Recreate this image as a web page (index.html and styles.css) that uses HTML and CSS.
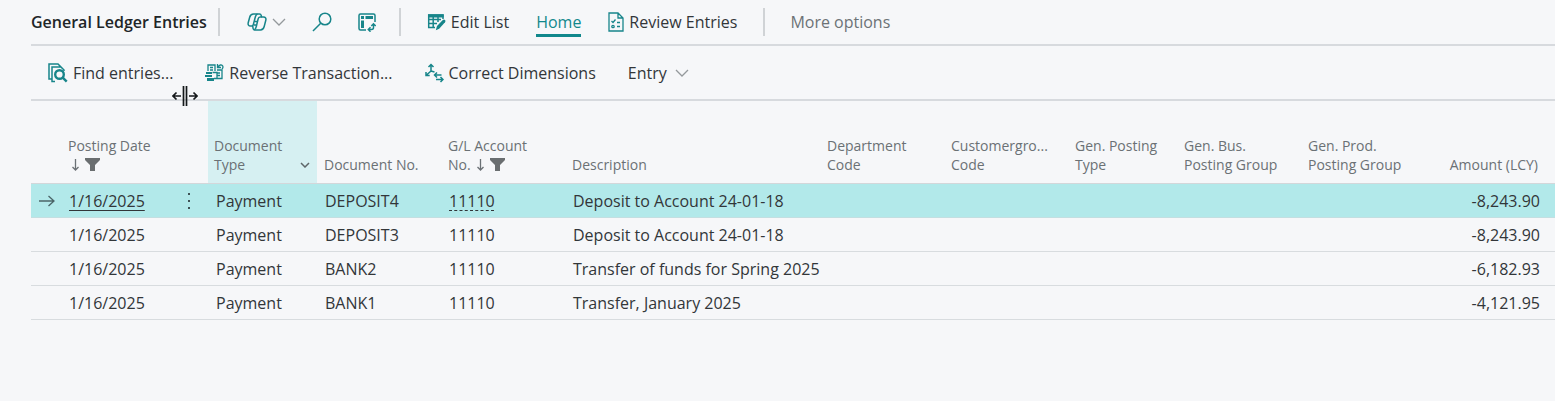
FILE: index.html
```html
<!DOCTYPE html>
<html lang="en">
<head>
  <meta charset="UTF-8">
  <meta name="viewport" content="width=device-width, initial-scale=1.0">
  <title>General Ledger Entries</title>
  <link rel="stylesheet" href="styles.css">
</head>
<body>
  <main class="page">
    <header class="topbar">
      <h1 class="title">General Ledger Entries</h1>
      <div class="tools">
        <button class="btn" aria-label="Copilot">
          <svg class="icon" width="20" height="20" viewBox="0 0 20 20">
            <path d="M6.500 2h6c1 0 1.500.6 1.700 1.400l.4 1.600h1.900c1.900 0 2.800 1.400 2.300 3.200l-1.600 6.300c-.5 1.900-1.600 3.500-3.700 3.500H7.800c-1 0-1.500-.6-1.700-1.400L5.700 14H3.500C1.600 14 .8 12.600 1.200 10.800L2.700 5.200C3.200 3.300 4.400 2 6.500 2z"/>
            <path d="M10.500 2C9 2.500 8.700 3.500 8.300 5L6.500 12c-.3 1.200-.6 2-1.500 2M14.600 5h-1.500c-1.300 0-1.700.8-2 2L9.300 14.500c-.4 1.700-.8 3-2 3.300M8 9.500h3M7 13h3"/>
          </svg>
          <svg class="chevron" width="14" height="8" viewBox="0 0 14 8"><path d="M1 1l6 6 6-6"/></svg>
        </button>
        <button class="btn" aria-label="Search">
          <svg class="icon" width="20" height="20" viewBox="0 0 20 20"><circle cx="13" cy="7" r="5.800"/><path d="M8.700 11.200L1 19"/></svg>
        </button>
        <button class="btn" aria-label="Analyze">
          <svg class="icon" width="18" height="19" viewBox="0 0 18 19">
            <path d="M8 17H2.500Q1 17 1 15.500V2.500Q1 1 2.500 1h13Q17 1 17 2.500V9M10.500 16.500h3q2 0 2-2V11M12.500 14.300l-2.200 2.200 2.200 2.200M13.300 13l2.200-2.200 2.200 2.200"/>
            <path class="fill" d="M3 3h3v3H3zM7.500 3H15v3H7.500zM3 7.500h3V15H3z"/>
          </svg>
        </button>
      </div>
      <nav class="actions">
        <button class="btn">
          <svg class="icon" width="19" height="18" viewBox="0 0 19 18">
            <path d="M8 14.500H1.700V2H16v4M2 6.500h12M2 10.500h8M6.200 3v11.500M11 3v6"/>
            <path class="fill" d="M1 1.300h15.700V4.500H1z"/>
            <path class="fill" d="M8.800 17.300l1.200-4.300 5.800-6q1.200-1 2.200 0t0 2.300l-5.800 6.500z"/>
          </svg>
          Edit List
        </button>
        <button class="btn active">Home</button>
        <button class="btn">
          <svg class="icon thin" width="16" height="20" viewBox="0 0 16 20">
            <path d="M1 1h9l5 5v13H1zM10 1v5h5M3.500 9l1.500 1.500L7.500 7.500M9 10.500h3M9 14.500h3"/><circle cx="5" cy="14.500" r="1.200"/>
          </svg>
          Review Entries
        </button>
      </nav>
      <button class="btn more">More options</button>
    </header>

    <nav class="subbar">
      <button class="btn">
        <svg class="icon" width="20" height="20" viewBox="0 0 20 20">
          <path d="M4 16H1V1h9l3 3M7 18.500H4V4h9l3 3v1"/>
          <g class="bold"><circle cx="11.500" cy="11.500" r="4.300"/><path d="M14.700 14.700l4 4"/></g>
        </svg>
        Find entries...
      </button>
      <button class="btn">
        <svg class="icon thin" width="19" height="19" viewBox="0 0 19 19">
          <path d="M3 8V2h7v6M12 7h5v8.500h-5M5 4.500h3M5 7h3M12 10h3M12 12.500h3M7.500 9.500H12v6H9"/>
          <path class="fill" d="M1 9h6v2H1zM0 12h7v2H0zM2 15h7v3H2z"/>
          <path d="M12.500 1v3.500H16M13 4q2.500-3.500 4.700-1 .8 1.500-.7 3"/>
        </svg>
        Reverse Transaction...
      </button>
      <button class="btn">
        <svg class="icon" width="19" height="20" viewBox="0 0 19 20">
          <path d="M6 8V1.500M3.500 4L6 1.500 8.500 4M6 8l-5 4.500M1 9v3.500h3.700M6 8l3.500 1M9.500 12h7M12 9.500L9.500 12l2.500 2.500M11 16.500h7M15.500 14l2.500 2.500-2.500 2.500"/>
        </svg>
        Correct Dimensions
      </button>
      <button class="btn entry">
        Entry
        <svg class="chevron" width="14" height="8" viewBox="0 0 14 8"><path d="M1 1l6 6 6-6"/></svg>
      </button>
    </nav>

    <table class="entries">
      <colgroup>
        <col class="w-mark"><col class="w-date"><col class="w-menu"><col class="w-type">
        <col class="w-code"><col class="w-code"><col class="w-desc"><col class="w-code">
        <col class="w-code"><col class="w-type"><col class="w-code"><col class="w-code"><col>
      </colgroup>
      <thead>
        <tr>
          <th></th>
          <th>Posting Date
            <span class="marks">
              <svg class="sort" width="9" height="14" viewBox="0 0 9 14"><path d="M4.500 1v11M1.500 9l3 3 3-3"/></svg>
              <svg class="filter" width="15" height="13" viewBox="0 0 15 13"><path d="M0 0h15v2L10 7v6H5V7L0 2z"/></svg>
            </span>
          </th>
          <th></th>
          <th class="picked">
            <div class="head">Document Type
              <svg class="caret" width="10" height="6" viewBox="0 0 10 6"><path d="M1 1l4 4 4-4"/></svg>
            </div>
          </th>
          <th>Document No.</th>
          <th>G/L Account
            <span class="marks no">No.
              <svg class="sort" width="9" height="14" viewBox="0 0 9 14"><path d="M4.500 1v11M1.500 9l3 3 3-3"/></svg>
              <svg class="filter" width="15" height="13" viewBox="0 0 15 13"><path d="M0 0h15v2L10 7v6H5V7L0 2z"/></svg>
            </span>
          </th>
          <th>Description</th>
          <th>Department<br>Code</th>
          <th>Customergro...<br>Code</th>
          <th>Gen. Posting<br>Type</th>
          <th>Gen. Bus.<br>Posting Group</th>
          <th>Gen. Prod.<br>Posting Group</th>
          <th class="num">Amount (LCY)</th>
        </tr>
      </thead>
      <tbody>
        <tr class="selected">
          <td><svg class="arrow" width="16" height="12" viewBox="0 0 16 12"><path d="M0 6h15M9.500 1L15 6l-5.500 5"/></svg></td>
          <td><a class="link" href="#">1/16/2025</a></td>
          <td><button class="btn dots" aria-label="Show more options"><svg width="4" height="18" viewBox="0 0 4 18"><path d="M1 1h2v2H1zM1 8h2v2H1zM1 15h2v2H1z"/></svg></button></td>
          <td>Payment</td>
          <td>DEPOSIT4</td>
          <td><a class="link dashed" href="#">11110</a></td>
          <td>Deposit to Account 24-01-18</td>
          <td></td><td></td><td></td><td></td><td></td>
          <td class="num">-8,243.90</td>
        </tr>
        <tr>
          <td></td>
          <td>1/16/2025</td>
          <td></td>
          <td>Payment</td>
          <td>DEPOSIT3</td>
          <td>11110</td>
          <td>Deposit to Account 24-01-18</td>
          <td></td><td></td><td></td><td></td><td></td>
          <td class="num">-8,243.90</td>
        </tr>
        <tr>
          <td></td>
          <td>1/16/2025</td>
          <td></td>
          <td>Payment</td>
          <td>BANK2</td>
          <td>11110</td>
          <td>Transfer of funds for Spring 2025</td>
          <td></td><td></td><td></td><td></td><td></td>
          <td class="num">-6,182.93</td>
        </tr>
        <tr>
          <td></td>
          <td>1/16/2025</td>
          <td></td>
          <td>Payment</td>
          <td>BANK1</td>
          <td>11110</td>
          <td>Transfer, January 2025</td>
          <td></td><td></td><td></td><td></td><td></td>
          <td class="num">-4,121.95</td>
        </tr>
      </tbody>
    </table>
  </main>

  <!-- column resize cursor -->
  <svg class="cursor" width="26" height="20" viewBox="0 0 26 20">
    <path d="M11.500 0v20M14.500 0v20M9 10H1M4.500 6.500L1 10l3.500 3.500M17 10h8M21.500 6.500L25 10l-3.500 3.500"/>
  </svg>
</body>
</html>
```

FILE: styles.css
```css
* {
  box-sizing: border-box;
}

body {
  margin: 0;
  background: #f6f7f9;
  color: #323639;
  font-family: "Open Sans", "Noto Sans", sans-serif;
  font-size: 16px;
}

svg {
  flex-shrink: 0;
  fill: none;
}

.page {
  padding-left: 31px;
}

.topbar {
  display: flex;
  align-items: center;
  height: 46px;
  border-bottom: 2px solid #d7dade;
}

.title {
  margin: 0;
  padding-right: 11px;
  font-size: 16px;
  font-weight: 600;
  color: #212527;
  white-space: nowrap;
}

.btn {
  display: flex;
  align-items: center;
  gap: 5px;
  padding: 0;
  border: 0;
  background: none;
  color: inherit;
  font: inherit;
  line-height: 24px;
  white-space: nowrap;
  cursor: pointer;
}

.tools,
.actions {
  display: flex;
  align-items: center;
  height: 28px;
  border-left: 2px solid #d0d3d6;
}

.tools {
  gap: 26px;
  padding: 0 23px 0 27px;
}

.actions {
  gap: 27px;
  padding: 0 26px;
  border-right: 2px solid #d0d3d6;
}

.active {
  padding-top: 2px;
  border-bottom: 3px solid #11888c;
  color: #11888c;
}

.more {
  padding-left: 25px;
  color: #6c7276;
}

.subbar {
  display: flex;
  align-items: center;
  gap: 32px;
  height: 55px;
  padding-left: 17px;
  border-bottom: 2px solid #d7dade;
}

.entry {
  gap: 8px;
}

.icon {
  stroke: #17858a;
  stroke-width: 1.5;
}

.icon.thin {
  stroke-width: 1.3;
}

.icon .fill {
  fill: #17858a;
  stroke: none;
}

.icon .bold {
  stroke-width: 2.4;
}

.chevron {
  stroke: #94999c;
  stroke-width: 1.3;
}

.entries {
  width: 100%;
  table-layout: fixed;
  border-collapse: separate;
  border-spacing: 0;
}

.w-mark { width: 30px; }
.w-date { width: 116px; }
.w-menu { width: 31px; }
.w-type { width: 109px; }
.w-code { width: 124px; }
.w-desc { width: 255px; }

.entries th {
  height: 83px;
  padding: 0 7px 9px;
  border-bottom: 1px solid #d3d7da;
  color: #6b7175;
  font-size: 14px;
  font-weight: 400;
  line-height: 19px;
  text-align: left;
  vertical-align: bottom;
}

.entries .picked {
  padding-left: 6px;
  background: #d6f0f2;
}

.head {
  display: flex;
  align-items: flex-end;
  justify-content: space-between;
}

.caret {
  margin-bottom: 6px;
  stroke: #5e6669;
  stroke-width: 1.5;
}

.marks {
  display: flex;
  align-items: center;
  gap: 5px;
  height: 19px;
  padding-left: 3px;
}

.no {
  padding-left: 0;
}

.sort {
  stroke: #6b7175;
  stroke-width: 1.3;
}

.filter {
  fill: #6a6e70;
}

.entries td {
  height: 34px;
  padding: 0 8px;
  border-bottom: 1px solid #d8dcdf;
  line-height: 24px;
  white-space: nowrap;
}

.selected td {
  background: #b2e9ea;
  border-bottom-color: #c3dfe1;
}

.entries .num {
  padding-right: 15px;
  text-align: right;
}

.entries th.num {
  padding-right: 17px;
}

.link {
  color: inherit;
  text-decoration-thickness: 1px;
  text-underline-offset: 3px;
}

.dashed {
  text-decoration-style: dashed;
}

.arrow {
  display: block;
  stroke: #4c6568;
  stroke-width: 1.3;
}

.dots {
  padding-left: 2px;
}

.dots svg {
  fill: #3e5255;
}

.cursor {
  position: absolute;
  top: 86px;
  left: 172px;
  stroke: #15191b;
  stroke-width: 1.7;
}
```
